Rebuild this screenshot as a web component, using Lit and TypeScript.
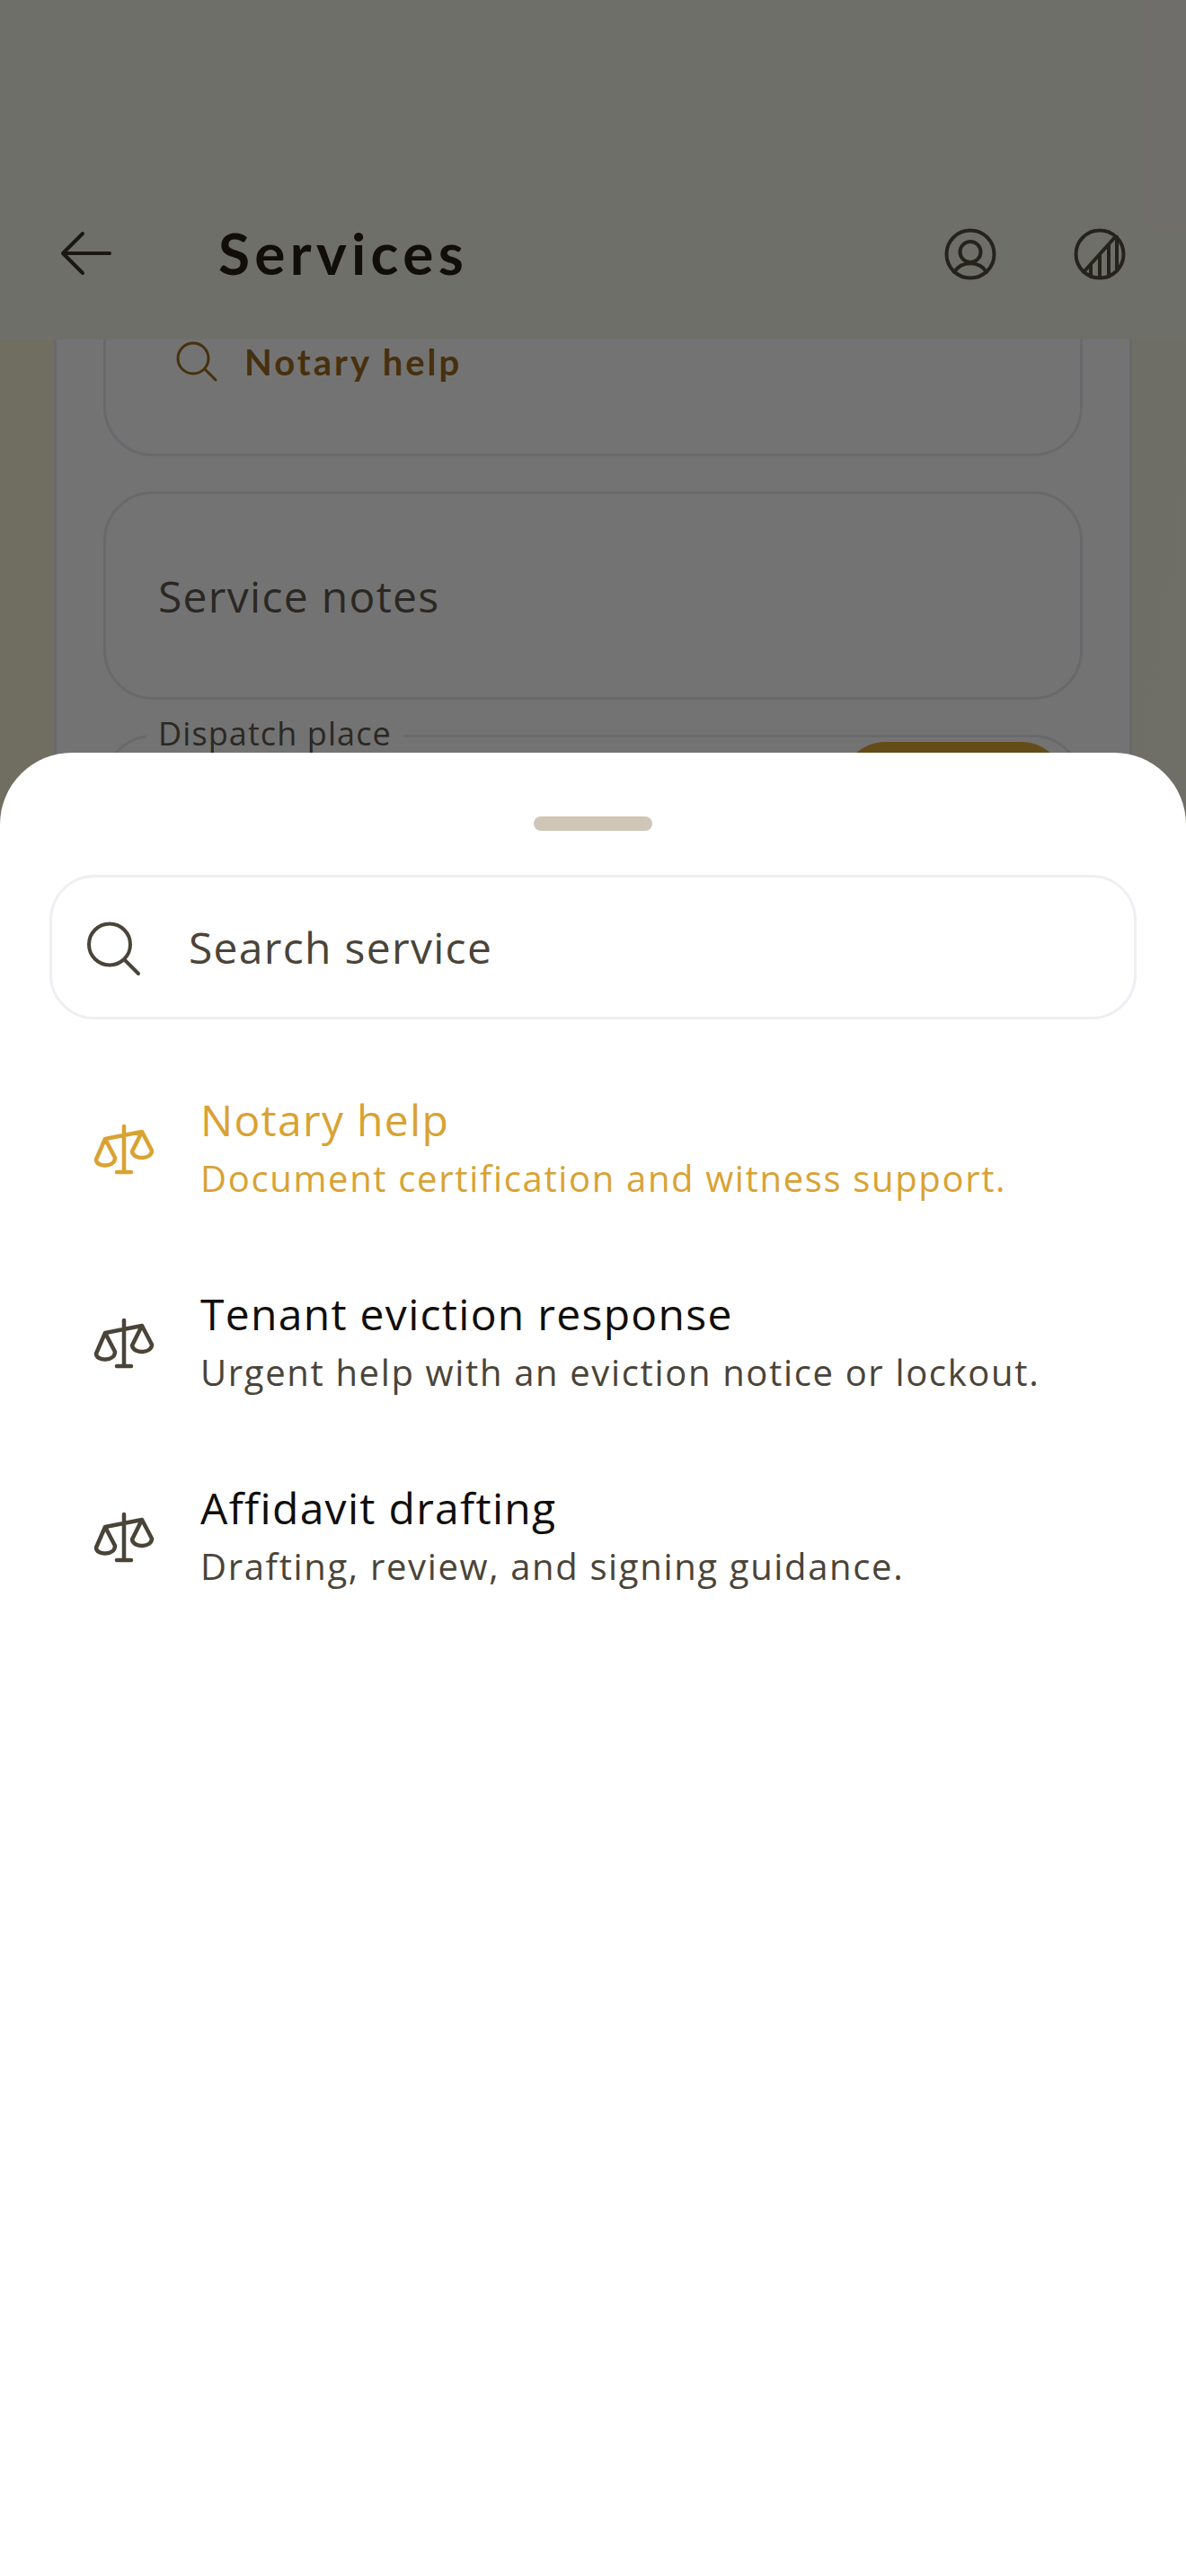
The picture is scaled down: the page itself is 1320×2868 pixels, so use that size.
import { LitElement, html, css, svg } from "lit";
import { customElement } from "lit/decorators.js";

const scales = svg`<path d="M138 1254V1305M130 1305H146M117 1268L158 1260M117 1268L107 1291C107 1300 128 1300 128 1289L117 1268ZM158 1260L147 1282C149 1292 169 1291 169 1281L158 1260Z" transform="translate(-100 -1250)"/>`;

const items = [
  { t: "Notary help", s: "Document certification and witness support.", on: true },
  { t: "Tenant eviction response", s: "Urgent help with an eviction notice or lockout.", on: false },
  { t: "Affidavit drafting", s: "Drafting, review, and signing guidance.", on: false },
];

@customElement("app-root")
export class AppRoot extends LitElement {
  static styles = css`
    :host { display: block; font-family: "Open Sans", sans-serif; }
    * { box-sizing: border-box; }
    .page { position: relative; height: 2868px; overflow: hidden; background: linear-gradient(100deg, #f9f3d3 0%, #f9f3d6 6%, #f6f3e8 100%); }
    .content { padding: 200px 60px 0; }
    .card { height: 1200px; background: #fff; border: 3px solid #e8e9f1; border-bottom: 0; padding: 73px 52px 0; display: flex; flex-direction: column; gap: 39px; }
    .field { position: relative; height: 232px; flex: none; border: 3px solid #e8e9f1; border-radius: 55px; display: flex; align-items: center; padding-left: 58px; font-size: 48px; letter-spacing: 1.3px; color: #5f5a50; }
    .query { padding: 22px 0 0 77px; gap: 29px; font-family: Lato, sans-serif; font-weight: 700; font-size: 40px; letter-spacing: 3px; color: #9c6b1f; }
    .query svg { flex: none; fill: none; stroke: #9c6b1f; stroke-width: 3; stroke-linecap: round; }
    .label { position: absolute; left: 45px; top: -27px; padding: 0 13px; background: #fff; font-size: 36px; line-height: 46px; letter-spacing: 1.1px; }
    .cta { position: absolute; right: 17px; top: 5px; width: 248px; height: 216px; border-radius: 48px; background: #dea935; }
    .scrim { position: absolute; inset: 0; background: rgba(0, 0, 0, 0.55); }
    header { position: absolute; top: 0; left: 0; right: 0; height: 378px; background: #f7f5ea; }
    .bar { position: absolute; z-index: 1; top: 188px; left: 0; right: 0; height: 190px; display: flex; align-items: center; padding: 0 66px 0 64px; }
    .bar svg { flex: none; fill: none; stroke: #1a1712; stroke-width: 4; stroke-linecap: round; stroke-linejoin: round; }
    .bar svg.ring { stroke: #26231d; stroke-width: 4; }
    h1 { margin: -4px 0 0 115px; font-family: Lato, sans-serif; font-weight: 700; font-size: 64px; letter-spacing: 5.3px; color: #110e0a; }
    .actions { margin-left: auto; display: flex; gap: 84px; }
    .sheet { position: absolute; top: 838px; bottom: 0; left: 0; right: 0; background: #fff; border-radius: 80px 80px 0 0; padding: 71px 55px 0; }
    .grip { width: 132px; height: 16px; margin: 0 auto 49px; border-radius: 8px; background: #d0c6b6; }
    .search { height: 161px; border: 3px solid #eeeef3; border-radius: 50px; display: flex; align-items: center; gap: 51px; padding-left: 37px; font-size: 48px; letter-spacing: 1.3px; color: #4a4438; }
    .search svg { flex: none; fill: none; stroke: #4a4438; stroke-width: 4; stroke-linecap: round; }
    .list { margin-top: 37px; }
    .item { height: 216px; display: flex; align-items: center; gap: 43px; padding-left: 45px; color: #4a4438; }
    .item svg { flex: none; fill: none; stroke: currentColor; stroke-width: 4.5; stroke-linecap: round; stroke-linejoin: round; }
    .item.on { color: #d9a233; }
    .title { font-size: 48px; line-height: 66px; letter-spacing: 1.3px; color: #110e0a; margin-top: -2px; }
    .on .title { color: #d9a233; }
    .sub { font-size: 40px; line-height: 64px; letter-spacing: 1.65px; }
  `;

  render() {
    return html`<div class="page">
      <div class="content">
        <div class="card">
          <div class="field query">
            <svg width="48" height="48" viewBox="0 0 48 48"><circle cx="20" cy="20" r="17"/><path d="M33 32L45 44"/></svg>
            Notary help
          </div>
          <div class="field">Service notes</div>
          <div class="field"><span class="label">Dispatch place</span><div class="cta"></div></div>
        </div>
      </div>
      <header></header>
      <div class="scrim"></div>
      <div class="bar">
        <svg width="64" height="64" viewBox="0 0 64 64"><path d="M58 31H6M28 9L6 31L28 53"/></svg>
        <h1>Services</h1>
        <div class="actions">
          <svg class="ring" width="60" height="60" viewBox="0 0 60 60"><circle cx="30" cy="30" r="26.5"/><circle cx="30" cy="27.5" r="11.5"/><path d="M12 50C20 37 40 37 48 50"/></svg>
          <svg class="ring" width="60" height="60" viewBox="0 0 60 60"><circle cx="30" cy="30" r="26.5"/><path d="M12 50L47 11M20 41V55M30 30V56M40 19V55M49 11V46"/></svg>
        </div>
      </div>
      <div class="sheet">
        <div class="grip"></div>
        <div class="search">
          <svg width="64" height="64" viewBox="0 0 64 64"><circle cx="27" cy="28.5" r="23"/><path d="M44 46L59 61"/></svg>
          Search service
        </div>
        <div class="list">
          ${items.map(
            (i) => html`<div class="item ${i.on ? "on" : ""}">
              <svg width="80" height="60" viewBox="0 0 80 60">${scales}</svg>
              <div><div class="title">${i.t}</div><div class="sub">${i.s}</div></div>
            </div>`
          )}
        </div>
      </div>
    </div>`;
  }
}
